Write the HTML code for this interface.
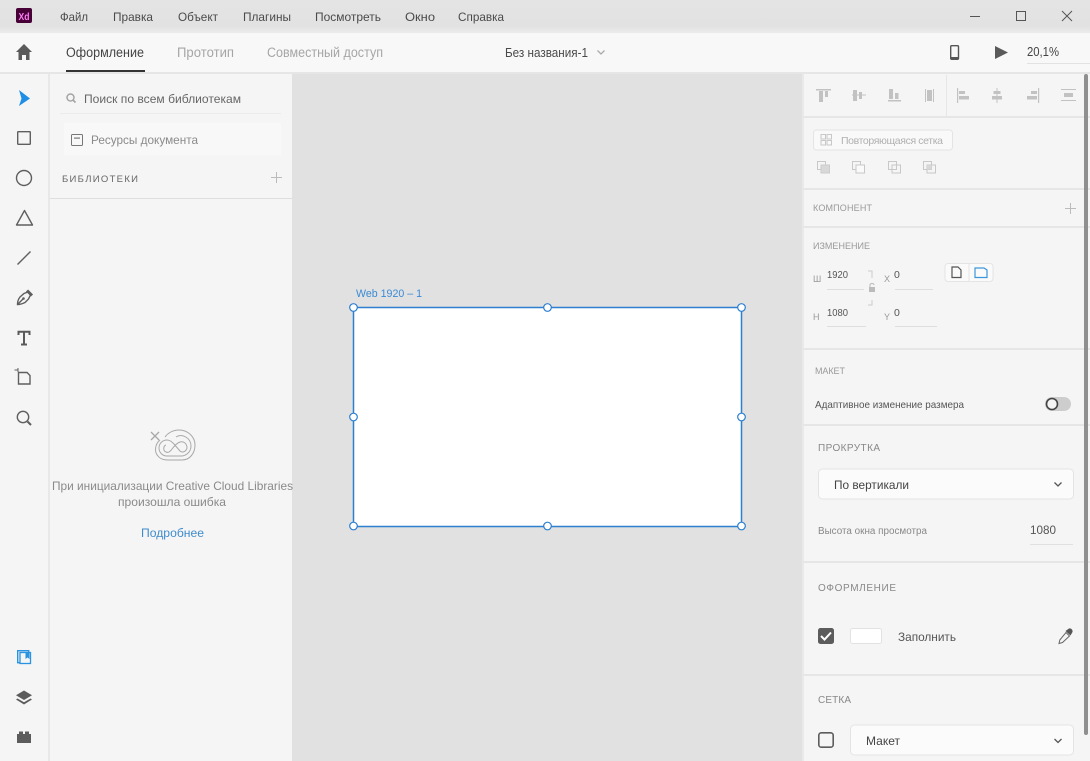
<!DOCTYPE html>
<html><head><meta charset="utf-8"><title>Adobe XD</title>
<style>
html,body{margin:0;padding:0;background:#f5f5f5;width:1090px;height:761px;overflow:hidden}
svg{display:block;position:absolute;left:0;top:0;filter:blur(.3px)}
text{font-family:"Liberation Sans","DejaVu Sans",sans-serif;font-size:12px;fill:#444}
.m{font-size:12px;fill:#4a4a4a}
.h{font-size:9px;fill:#999}
.d{fill:#c2c2c2;stroke:none}
.o{fill:none;stroke:#c8c8c8;stroke-width:1}
.i{fill:none;stroke:#5f5f5f;stroke-width:1.4}
</style></head><body>
<svg width="1090" height="761" viewBox="0 0 1090 761" xmlns="http://www.w3.org/2000/svg">
<defs><linearGradient id="g" x1="0" y1="0" x2="0" y2="1"><stop offset="0" stop-color="#e4e4e4"/><stop offset=".8" stop-color="#e2e2e2"/><stop offset="1" stop-color="#ececec"/></linearGradient></defs>
<rect width="1090" height="761" fill="#f5f5f5"/>
<rect width="1090" height="33" fill="url(#g)"/>
<rect y="33" width="1090" height="39" fill="#f8f8f8"/>
<rect y="72" width="1090" height="2" fill="#e6e6e6"/>
<rect x="48" y="74" width="2" height="687" fill="#e8e8e8"/>
<rect x="292" y="74" width="510" height="687" fill="#e1e1e1"/>
<rect x="802" y="74" width="2" height="687" fill="#e9e9e9"/>

<!-- title bar -->
<rect x="16" y="8" width="16" height="15" rx="2" fill="#470137"/>
<text x="18.500" y="20" style="font-size:10px;font-weight:bold;fill:#ff7ff8" textLength="11" lengthAdjust="spacingAndGlyphs">Xd</text>
<text class="m" x="60" y="21" textLength="28" lengthAdjust="spacingAndGlyphs">Файл</text>
<text class="m" x="113" y="21" textLength="40" lengthAdjust="spacingAndGlyphs">Правка</text>
<text class="m" x="178" y="21" textLength="40" lengthAdjust="spacingAndGlyphs">Объект</text>
<text class="m" x="243" y="21" textLength="48" lengthAdjust="spacingAndGlyphs">Плагины</text>
<text class="m" x="315" y="21" textLength="66" lengthAdjust="spacingAndGlyphs">Посмотреть</text>
<text class="m" x="405" y="21" textLength="30" lengthAdjust="spacingAndGlyphs">Окно</text>
<text class="m" x="458" y="21" textLength="46" lengthAdjust="spacingAndGlyphs">Справка</text>
<path d="M970 16.500H980" stroke="#555" fill="none"/>
<rect x="1016.500" y="11.500" width="9" height="9" fill="none" stroke="#555"/>
<path d="M1062 11L1072 21M1072 11L1062 21" stroke="#555" fill="none"/>

<!-- toolbar -->
<path d="M24 44L16 52H18.500V60H22V55H26V60H29.500V52H32Z" fill="#5a5a5a"/>
<text x="66" y="57" style="font-size:13.500px;fill:#444" textLength="78" lengthAdjust="spacingAndGlyphs">Оформление</text>
<rect x="66" y="70" width="79" height="2" fill="#333"/>
<text x="177" y="57" style="font-size:13.500px;fill:#a6a6a6" textLength="57" lengthAdjust="spacingAndGlyphs">Прототип</text>
<text x="267" y="57" style="font-size:13.500px;fill:#a6a6a6" textLength="116" lengthAdjust="spacingAndGlyphs">Совместный доступ</text>
<text x="505" y="57" style="font-size:13px;fill:#4a4a4a" textLength="83" lengthAdjust="spacingAndGlyphs">Без названия-1</text>
<path d="M597.500 50.500L601 54L604.500 50.500" fill="none" stroke="#aaa" stroke-width="1.300"/>
<rect x="950.700" y="45.700" width="7.800" height="13.600" rx="1" fill="none" stroke="#555" stroke-width="1.400"/>
<rect x="951" y="57" width="7" height="2.500" fill="#555"/>
<path d="M995 46L1008 52.500L995 59Z" fill="#5a5a5a"/>
<text x="1027" y="56" style="font-size:12.500px;fill:#444" textLength="32" lengthAdjust="spacingAndGlyphs">20,1%</text>
<rect x="1027" y="63" width="63" height="1" fill="#e2e2e2"/>

<!-- left tools -->
<path d="M19 90L30 98.500L19 106L21.500 98.500Z" fill="#1e8ee6"/>
<rect x="17.700" y="131.700" width="12.600" height="12.600" rx=".5" class="i"/>
<circle cx="24" cy="178" r="7.500" class="i"/>
<path d="M24.500 210.500L32.500 225H16.500Z" class="i" stroke-linejoin="round"/>
<path d="M17.500 264.500L30.500 251.500" class="i"/>
<path d="M28 292L30.500 295L28.500 299L25 302.500C22 304 19.500 304.500 17.500 304.500C17.500 302 18 299.500 20 297L24 293.500Z" class="i"/>
<path d="M27 290.500L32 295.500" stroke="#5f5f5f" stroke-width="3" fill="none"/>
<path d="M18 304L23 299" class="i" stroke-width="1"/>
<circle cx="23.500" cy="298.500" r="1.300" fill="#5f5f5f"/>
<path d="M18.500 335V331.800H29.500V335M24 332V344.500M21 344.500H27" fill="none" stroke="#5a5a5a" stroke-width="2"/>
<path d="M18.500 372.500V384H30V375.500L27 372.500Z" class="i" stroke-width="1.200"/>
<path d="M18 368V372M14.500 370H18" stroke="#5f5f5f" fill="none"/>
<circle cx="23" cy="417" r="5.700" class="i"/>
<path d="M27.500 421.500L31 425" stroke="#5f5f5f" stroke-width="2" fill="none"/>
<rect x="17.700" y="650.700" width="11" height="12" fill="none" stroke="#2a93e0" stroke-width="1.400"/>
<rect x="20" y="652.500" width="10.500" height="11" fill="#f5f5f5" stroke="#2a93e0" stroke-width="1.300"/>
<path d="M25.500 652H29.500V659L27.500 657.500L25.500 659Z" fill="#2a93e0"/>
<path d="M24 690.500L32 695.200L24 700L16 695.200Z" fill="#5c5c5c"/>
<path d="M17.500 698.500L24 702.300L30.500 698.500L32 699.500L24 704.500L16 699.500Z" fill="#5c5c5c"/>
<path d="M17 734H19V731.500H23V734H25V731.500H29V734H31V743H17Z" fill="#5c5c5c"/>

<!-- library panel -->
<circle cx="70.500" cy="97.500" r="3.500" fill="none" stroke="#a5a5a5" stroke-width="1.500"/>
<path d="M73 100L75.500 102.500" stroke="#a5a5a5" stroke-width="1.700"/>
<text x="84" y="103" style="font-size:12px;fill:#666" textLength="157" lengthAdjust="spacingAndGlyphs">Поиск по всем библиотекам</text>
<rect x="60" y="113" width="221" height="1" fill="#ebebeb"/>
<rect x="64" y="123" width="217" height="32" fill="#f8f8f8"/>
<rect x="71.500" y="134.500" width="11" height="11" rx="1" fill="none" stroke="#777"/>
<rect x="74" y="137.500" width="6" height="1.200" fill="#777"/>
<text x="91" y="144" style="font-size:12px;fill:#8a8a8a" textLength="107" lengthAdjust="spacingAndGlyphs">Ресурсы документа</text>
<text x="62" y="182" style="font-size:9.500px;fill:#666" textLength="76" lengthAdjust="spacing">БИБЛИОТЕКИ</text>
<path d="M276.500 172V183M271 177.500H282" stroke="#bbb" fill="none"/>
<rect x="50" y="198" width="242" height="1" fill="#dedede"/>
<g fill="none" stroke="#a8a8a8" stroke-width="1">
<path d="M151 432L159 440M159 432L151 440" stroke-width="1.300"/>
<path d="M160 440C155 444 154 452 158 456C161 460 166 460 170 460H182C190 460 195 453 195 445C195 436 187 430 179 430C172 430 167 434 165 437"/>
<path d="M176 437C182 433 191 438 191 446C191 452 186 456 181 456H167C162 456 159 452 159 448C159 443 163 440 167 440C170 440 172 442 174 444L180 451C182 453 186 452 187 448C187 443 183 441 180 442C177 443 175 445 172 449C170 452 168 453 166 452C163 451 163 446 166 445"/>
</g>
<text x="52" y="490" style="font-size:12px;fill:#8a8a8a" textLength="241" lengthAdjust="spacingAndGlyphs">При инициализации Creative Cloud Libraries</text>
<text x="118" y="506" style="font-size:12px;fill:#8a8a8a" textLength="108" lengthAdjust="spacingAndGlyphs">произошла ошибка</text>
<text x="141" y="537" style="font-size:12px;fill:#3f8ccc" textLength="63" lengthAdjust="spacingAndGlyphs">Подробнее</text>

<!-- canvas -->
<text x="356" y="297" style="font-size:11px;fill:#3a8ad6" textLength="66" lengthAdjust="spacingAndGlyphs">Web 1920 – 1</text>
<rect x="353.500" y="307.500" width="388" height="219" fill="#fff" stroke="#2d7fd0" stroke-width="1.500"/>
<g fill="#fff" stroke="#2d7fd0" stroke-width="1.200">
<circle cx="353.500" cy="307.500" r="3.800"/><circle cx="547.500" cy="307.500" r="3.800"/><circle cx="741.500" cy="307.500" r="3.800"/>
<circle cx="353.500" cy="417" r="3.800"/><circle cx="741.500" cy="417" r="3.800"/>
<circle cx="353.500" cy="526" r="3.800"/><circle cx="547.500" cy="526" r="3.800"/><circle cx="741.500" cy="526" r="3.800"/>
</g>

<!-- right panel dividers -->
<g fill="#e6e6e6">
<rect x="803" y="116" width="287" height="2"/><rect x="803" y="188" width="287" height="2"/>
<rect x="803" y="226" width="287" height="2"/><rect x="803" y="348" width="287" height="2"/>
<rect x="803" y="424" width="287" height="2"/><rect x="803" y="561" width="287" height="2"/>
<rect x="803" y="674" width="287" height="2"/><rect x="946" y="75" width="1" height="41"/>
</g>
<rect x="1084" y="74" width="4" height="661" rx="2" fill="#8f8f8f"/>

<!-- align icons -->
<g class="d">
<rect x="816" y="89" width="15" height="1.500"/><rect x="819" y="91" width="4" height="11"/><rect x="825" y="91" width="3" height="6"/>
<rect x="852" y="94.500" width="14" height="1"/><rect x="853" y="90" width="4" height="11"/><rect x="859" y="92" width="3" height="7"/>
<rect x="888" y="100" width="13" height="1.500"/><rect x="889" y="89" width="4" height="10"/><rect x="895" y="93" width="3.500" height="6"/>
<rect x="925" y="89" width="1" height="13"/><rect x="933" y="89" width="1" height="13"/><rect x="927" y="90" width="5" height="11"/>
<rect x="957" y="88" width="1.200" height="15"/><rect x="959" y="91" width="6" height="3"/><rect x="959" y="96" width="10" height="3.500"/>
<rect x="996.500" y="88" width="1" height="15"/><rect x="993.500" y="91" width="7" height="3"/><rect x="992" y="96" width="10" height="3.500"/>
<rect x="1038" y="88" width="1.200" height="15"/><rect x="1031" y="91" width="6" height="3"/><rect x="1027" y="96" width="10" height="3.500"/>
<rect x="1061" y="89" width="15" height="1"/><rect x="1061" y="100" width="15" height="1"/><rect x="1064" y="93" width="9" height="4"/>
</g>

<!-- repeat grid -->
<rect x="813.500" y="130" width="139" height="20" rx="3" fill="#f9f9f9" stroke="#e4e4e4"/>
<g class="o">
<rect x="821" y="134.500" width="4.500" height="4.500"/><rect x="827" y="134.500" width="4.500" height="4.500"/>
<rect x="821" y="140.500" width="4.500" height="4.500"/><rect x="827" y="140.500" width="4.500" height="4.500"/>
</g>
<text x="841" y="144" style="font-size:10.500px;fill:#b0b0b0" textLength="102" lengthAdjust="spacing">Повторяющаяся сетка</text>
<g class="o">
<rect x="817.500" y="161.500" width="8" height="8"/><rect x="821" y="165" width="8.500" height="8" fill="#d8d8d8" stroke="#ccc"/>
<rect x="852.500" y="161.500" width="8" height="8"/><rect x="856" y="165" width="8.500" height="8" fill="#fafafa"/>
<rect x="888.500" y="161.500" width="8" height="8"/><rect x="892" y="165" width="8.500" height="8"/>
<rect x="923.500" y="161.500" width="8" height="8"/><rect x="927" y="165" width="8.500" height="8"/>
<rect x="927" y="165" width="4.500" height="4.500" fill="#d8d8d8" stroke="none"/>
</g>

<!-- component -->
<text x="813" y="211" class="h" textLength="59" lengthAdjust="spacing">КОМПОНЕНТ</text>
<path d="M1070.500 203V214M1065 208.500H1076" stroke="#bbb" fill="none"/>

<!-- transform -->
<text x="813" y="249" class="h" textLength="57" lengthAdjust="spacing">ИЗМЕНЕНИЕ</text>
<text x="813" y="282" style="font-size:9px;fill:#999">Ш</text>
<text x="827" y="278" style="font-size:10.500px;fill:#555" textLength="21" lengthAdjust="spacingAndGlyphs">1920</text>
<rect x="827" y="289" width="37" height="1" fill="#dedede"/>
<path d="M868 271H872V278M872 300V305H868" fill="none" stroke="#ccc"/>
<rect x="869" y="287" width="6" height="5" fill="#bbb"/>
<path d="M870 287V285C870 283 874 283 874 285" fill="none" stroke="#bbb"/>
<text x="884" y="282" style="font-size:9px;fill:#999">X</text>
<text x="894" y="278" style="font-size:10.500px;fill:#555">0</text>
<rect x="895" y="289" width="38" height="1" fill="#dedede"/>
<rect x="945" y="263.500" width="48" height="18" rx="3" fill="#fafafa" stroke="#e4e4e4"/>
<rect x="968.500" y="264" width="1" height="17" fill="#e4e4e4"/>
<path d="M952 267H958L961 270V277.500H952Z" fill="none" stroke="#555" stroke-width="1.200"/>
<path d="M975 268H984L987 270V277.500H975Z" fill="none" stroke="#3a97dc" stroke-width="1.200"/>
<text x="813" y="320" style="font-size:9px;fill:#999">Н</text>
<text x="827" y="316" style="font-size:10.500px;fill:#555" textLength="21" lengthAdjust="spacingAndGlyphs">1080</text>
<rect x="827" y="326" width="39" height="1" fill="#dedede"/>
<text x="884" y="320" style="font-size:9px;fill:#999">Y</text>
<text x="894" y="316" style="font-size:10.500px;fill:#555">0</text>
<rect x="895" y="326" width="42" height="1" fill="#dedede"/>

<!-- layout -->
<text x="815" y="374" class="h" textLength="30" lengthAdjust="spacing">МАКЕТ</text>
<text x="815" y="408" style="font-size:10.500px;fill:#555" textLength="149" lengthAdjust="spacingAndGlyphs">Адаптивное изменение размера</text>
<rect x="1045" y="397" width="26" height="14" rx="7" fill="#cdcdcd"/>
<circle cx="1052" cy="404" r="5.500" fill="#f5f5f5" stroke="#444" stroke-width="1.600"/>

<!-- scroll -->
<text x="818" y="451" style="font-size:10px;fill:#888" textLength="62" lengthAdjust="spacing">ПРОКРУТКА</text>
<rect x="818.500" y="469" width="255" height="30" rx="4" fill="#fbfbfb" stroke="#e4e4e4"/>
<text x="834" y="489" style="font-size:12px;fill:#444" textLength="75" lengthAdjust="spacingAndGlyphs">По вертикали</text>
<path d="M1054.500 482.500L1058 486L1061.500 482.500" fill="none" stroke="#555" stroke-width="1.300"/>
<text x="818" y="534" style="font-size:10px;fill:#888" textLength="109" lengthAdjust="spacingAndGlyphs">Высота окна просмотра</text>
<text x="1030" y="534" style="font-size:12px;fill:#555" textLength="26" lengthAdjust="spacingAndGlyphs">1080</text>
<rect x="1030" y="544" width="43" height="1" fill="#e0e0e0"/>

<!-- appearance -->
<text x="818" y="591" style="font-size:10px;fill:#888" textLength="78" lengthAdjust="spacing">ОФОРМЛЕНИЕ</text>
<rect x="818" y="628" width="16" height="16" rx="2.500" fill="#5c5c5c"/>
<path d="M821 636L824.500 639.500L831 632.500" fill="none" stroke="#fff" stroke-width="2"/>
<rect x="850.500" y="628.500" width="31" height="15" rx="2" fill="#fff" stroke="#e2e2e2"/>
<text x="898" y="641" style="font-size:12px;fill:#555" textLength="58" lengthAdjust="spacingAndGlyphs">Заполнить</text>
<path d="M1066 632.500L1069.500 636L1062.500 642.500L1059 643.500L1059.800 640Z" fill="none" stroke="#666" stroke-width="1"/>
<path d="M1065.500 631L1069 628.500C1071 628 1073 630 1072.500 632L1070.500 635.500Z" fill="#555"/>

<!-- grid -->
<text x="818" y="703" style="font-size:10px;fill:#888" textLength="33" lengthAdjust="spacing">СЕТКА</text>
<rect x="818.800" y="732.800" width="14.400" height="14.400" rx="2.500" fill="none" stroke="#5c5c5c" stroke-width="1.600"/>
<rect x="850.500" y="725" width="223" height="30" rx="4" fill="#fbfbfb" stroke="#e4e4e4"/>
<text x="866" y="745" style="font-size:12px;fill:#444" textLength="34" lengthAdjust="spacingAndGlyphs">Макет</text>
<path d="M1054.500 739L1058 742.500L1061.500 739" fill="none" stroke="#555" stroke-width="1.300"/>
</svg>
</body></html>
